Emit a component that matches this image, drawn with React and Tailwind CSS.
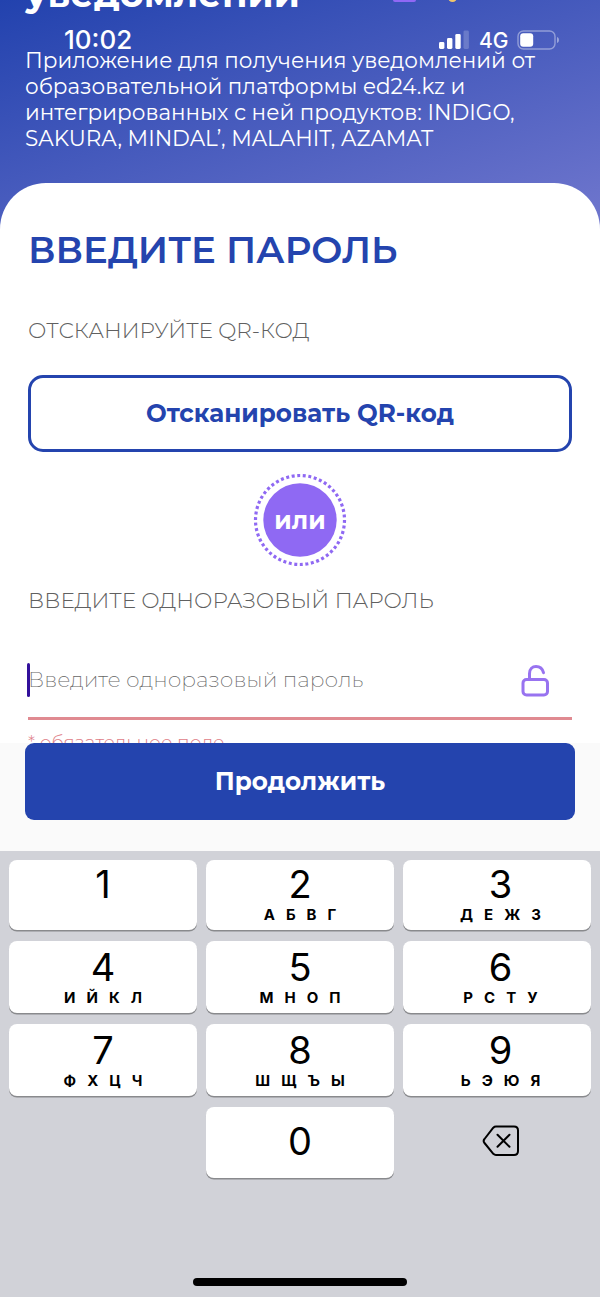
const KEYS = [
  ["1", ""],
  ["2", "АБВГ"],
  ["3", "ДЕЖЗ"],
  ["4", "ИЙКЛ"],
  ["5", "МНОП"],
  ["6", "РСТУ"],
  ["7", "ФХЦЧ"],
  ["8", "ШЩЪЫ"],
  ["9", "ЬЭЮЯ"],
];

function StatusBar() {
  return (
    <div className="absolute inset-x-0 top-0 flex h-[80px] items-center justify-between pl-[64px] pr-[40px] font-['Inter',sans-serif] text-white">
      <span className="text-[26px] leading-none font-medium">10:02</span>
      <div className="flex items-center">
        <svg width="31" height="20" viewBox="0 0 31 20" fill="white">
          <rect x="0" y="12" width="5.4" height="7" rx="1.4" />
          <rect x="8" y="8" width="5.4" height="11" rx="1.4" />
          <rect x="16.3" y="4" width="5.4" height="15" rx="1.4" />
          <rect x="24.5" y="0.5" width="5.4" height="18.5" rx="1.4" opacity=".2" />
        </svg>
        <span className="ml-[9px] w-[29px] text-[21px] leading-none font-medium">4G</span>
        <svg className="ml-[9px]" width="43" height="20" viewBox="0 0 43 20" fill="none">
          <rect x="1" y="1" width="37" height="18" rx="5.5" stroke="white" strokeOpacity=".4" strokeWidth="1.4" />
          <rect x="3.2" y="3.2" width="13" height="13.6" rx="3" fill="white" />
          <path d="M40 7v6c2.6-.6 2.6-5.4 0-6Z" fill="white" fillOpacity=".45" />
        </svg>
      </div>
    </div>
  );
}

function Intro() {
  return (
    <header className="h-[183px] overflow-hidden pl-[25px] text-white">
      <div className="relative -mt-[29px] flex h-[76px] items-start">
        <h1 className="w-[368px] text-[36.8px] leading-[46px] font-bold">уведомлений</h1>
        <span className="mt-[21px] h-[10px] w-[23px] rounded-b-[2px] bg-[#9068f5]" />
        <span className="ml-[32px] mt-[22px] size-[9px] rounded-full bg-[#f0c66a]" />
      </div>
      <div className="text-[21.500px] leading-[26px] whitespace-nowrap">
        <p>Приложение для получения уведомлений от</p>
        <p>образовательной платформы ed24.kz и</p>
        <p>интегрированных с ней продуктов: INDIGO,</p>
        <p>SAKURA, MINDAL’, MALAHIT, AZAMAT</p>
      </div>
    </header>
  );
}

function LockIcon() {
  return (
    <svg width="30" height="34" viewBox="0 0 30 34" fill="none" stroke="#9873f0" strokeWidth="3" strokeLinecap="round">
      <rect x="2" y="15.500" width="24.500" height="15.500" rx="3.500" />
      <path d="M8.500 15V9.500C8.500 5 11.500 2.500 15 2.500c3.900 0 6.500 2.200 7.500 6.200" />
    </svg>
  );
}

function PasswordCard() {
  return (
    <main className="h-[560px] overflow-hidden rounded-t-[46px] bg-white px-[28px] whitespace-nowrap">
      <h2 className="pt-[44px] text-[36.900px] leading-[46px] font-semibold text-[#2444ae]">ВВЕДИТЕ ПАРОЛЬ</h2>
      <p className="mt-[44px] text-[21.600px] leading-[27px] font-light text-[#606060]">ОТСКАНИРУЙТЕ QR-КОД</p>
      <button className="mt-[31px] flex h-[77px] w-[544px] items-center justify-center rounded-[15px] border-[3px] border-[#2444ae] text-[24.600px] font-bold text-[#2444ae]">
        Отсканировать QR-код
      </button>
      <div className="relative mx-auto mt-[21px] flex size-[94px] items-center justify-center">
        <svg className="absolute inset-0" width="94" height="94" viewBox="0 0 94 94">
          <circle cx="47" cy="47" r="44.500" fill="none" stroke="#8f69f3" strokeWidth="3.200" pathLength="150" strokeDasharray="1.600 1.400" />
          <circle cx="47" cy="47" r="36.700" fill="#8f69f3" />
        </svg>
        <span className="relative text-[24.600px] leading-none font-bold text-white">или</span>
      </div>
      <p className="mt-[19px] text-[21.600px] leading-[28px] font-light text-[#606060]">ВВЕДИТЕ ОДНОРАЗОВЫЙ ПАРОЛЬ</p>
      <div className="mt-[49px] flex h-[57px] items-start justify-between border-b-[3px] border-[#e08a91]">
        <div className="-ml-[1px] flex h-[34px] items-center">
          <span className="h-[34px] w-[3px] rounded-full bg-[#32109b]" />
          <span className="-mt-[2px] -ml-[2px] text-[21.700px] font-extralight text-[#666]">Введите одноразовый пароль</span>
        </div>
        <span className="mr-[21px] mt-[1px]"><LockIcon /></span>
      </div>
      <p className="mt-[11px] text-[18.700px] leading-[24px] font-light text-[#e08088]">* обязательное поле</p>
    </main>
  );
}

function Key({ digit, letters, className = "" }) {
  const zero = digit === "0";
  return (
    <div className={`flex flex-col items-center rounded-[8px] bg-white text-black shadow-[0_1.500px_0_#898a8d] ${zero ? "justify-center pb-[3px]" : "justify-end pb-[5px]"} ${className}`}>
      <span className="text-[38px] leading-[40px]">{digit}</span>
      {!zero && (
        <span className="mt-[1px] flex h-[20px] gap-[11px] text-[15px] leading-[20px] font-bold">
          {[...letters].map((c) => <span key={c}>{c}</span>)}
        </span>
      )}
    </div>
  );
}

function Keyboard() {
  return (
    <section className="flex h-[446px] flex-col items-center justify-between bg-[#d1d2d8] px-[9px] pt-[9px] pb-[11px] font-['Inter',sans-serif]">
      <div className="grid w-full grid-cols-3 grid-rows-[70px_72px_72px_71px] gap-x-[9px] gap-y-[11px]">
        {KEYS.map(([d, l], i) => (
          <Key key={d} digit={d} letters={l} className={i % 3 === 2 ? "pl-[7px]" : ""} />
        ))}
        <span />
        <Key digit="0" letters="" />
        <div className="flex items-center justify-center">
          <svg className="-mt-[3px] ml-[9px]" width="46" height="32" viewBox="0 0 46 32" fill="none" stroke="black" strokeWidth="2" strokeLinecap="round" strokeLinejoin="round">
            <path d="M17 1.500H35q4 0 4 4V26q0 4-4 4H17q-1.500 0-2.700-1.200L5.500 18q-1.700-2 0-4L14.300 2.700Q15.500 1.500 17 1.500Z" />
            <path d="m18.500 9.800 12 12m0-12-12 12" />
          </svg>
        </div>
      </div>
      <div className="h-[8px] w-[214px] rounded-full bg-black" />
    </section>
  );
}

export default function App() {
  return (
    <div className="relative flex h-[1297px] w-[600px] flex-col overflow-hidden bg-white font-['Montserrat','Inter',sans-serif]">
      <div className="h-[743px] bg-[linear-gradient(162deg,#2242ae_0px,#6c74cc_380px)]">
        <Intro />
        <PasswordCard />
      </div>
      <footer className="h-[108px] shrink-0 bg-[#fafafa] px-[25px]">
        <button className="flex h-[77px] w-full items-center justify-center rounded-[9px] bg-[#2444ae] text-[24.600px] font-bold text-white">Продолжить</button>
      </footer>
      <Keyboard />
      <StatusBar />
    </div>
  );
}
